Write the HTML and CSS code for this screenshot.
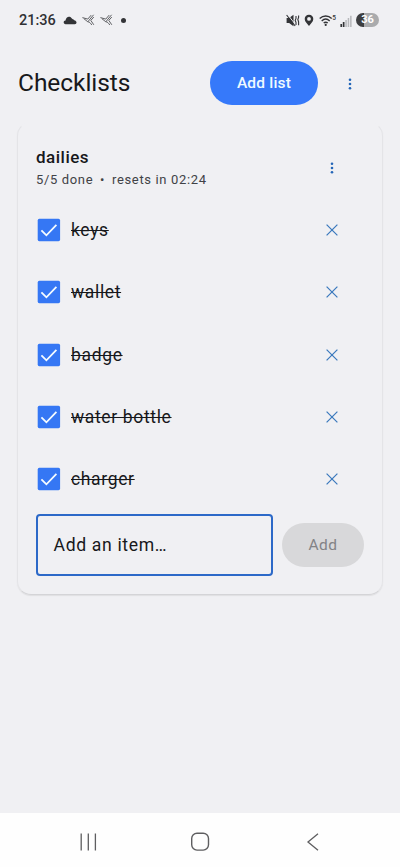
FILE: index.html
```html
<!DOCTYPE html>
<html lang="en">
<head>
<meta charset="utf-8">
<meta name="viewport" content="width=device-width, initial-scale=1">
<title>Checklists</title>
<link rel="stylesheet" href="styles.css">
</head>
<body>
<svg width="0" height="0" class="defs" aria-hidden="true">
  <symbol id="check" viewBox="0 0 24 24"><rect x="0.7" y="0.8" width="22.4" height="22.4" rx="1.6" fill="#3577f4"/><path d="M4.4 12.3l5 5L19.4 6.9" fill="none" stroke="#f4fbff" stroke-width="1.8"/></symbol>
  <symbol id="close" viewBox="0 0 12 12"><path d="M.6.6l10.8 10.8M11.4.6L.6 11.4" fill="none" stroke="#3b79bd" stroke-width="1.25"/></symbol>
  <symbol id="more" viewBox="0 0 4 12"><g fill="#2466b8"><circle cx="2" cy="1.7" r="1.3"/><circle cx="2" cy="6" r="1.3"/><circle cx="2" cy="10.3" r="1.3"/></g></symbol>
  <symbol id="bird" viewBox="0 0 13 12"><path d="M.4 3.6l5.400 1.500 3.400-4M1.800 4.600l4 3.200L11.600.8M11.800 3L8.800 6.400l3 4.400M5.800 7.800c2 0 2.800 1.600 4 3.200" fill="none" stroke="#5a5b5e" stroke-width=".95"/></symbol>
</svg>
<div class="screen">
  <div class="status">
    <span class="clock">21:36</span>
    <svg class="cloud" width="14" height="9" viewBox="0 0 14 9"><path d="M2.600 8.200C.2 8.200-.1 4.800 2.500 4.600 3 .6 6.700-.4 8.600 2.300c.6 1 2 .8 2.600 1.900 2.900.5 3.100 4 .5 4z" fill="#333437"/></svg>
    <svg class="bird" width="13" height="12"><use href="#bird"/></svg>
    <svg class="bird" width="13" height="12"><use href="#bird"/></svg>
    <span class="dot"></span>
    <div class="system">
      <svg width="14" height="13" viewBox="0 0 14 13"><path d="M.6 4h2.500L7.500.8v11.400L3.100 8.900H.6z" fill="#333437"/><path d="M1.600.4l8 10.500" stroke="#f0f0f3" stroke-width="1"/><path d="M.6 1l8.600 11M10 2v2.400l-.8 2 .8 2V11M12.600 1.500v2l-.8 2 .8 2.300v3.400" fill="none" stroke="#333437" stroke-width="1.100"/></svg>
      <svg class="pin" width="10" height="13" viewBox="0 0 10 13"><path fill-rule="evenodd" d="M5 .8C2.400.8.7 2.600.7 5c0 2.800 2.500 4.300 4.300 7 1.800-2.700 4.300-4.200 4.300-7C9.300 2.600 7.600.8 5 .8zM5 3a1.900 1.900 0 1 1 0 3.800A1.900 1.900 0 0 1 5 3z" fill="#333437"/></svg>
      <svg class="wifi" width="18" height="13" viewBox="0 0 18 13"><g fill="none" stroke="#333437" stroke-width="1.350"><path d="M.7 4.600c3.600-3.500 8.500-3.500 12 0"/><path d="M2.700 6.900c2.500-2.400 5.500-2.400 8 0"/><path d="M4.700 9.100c1.300-1.200 2.700-1.200 4 0"/></g><circle cx="6.700" cy="10.900" r="1.100" fill="#333437"/><text x="13.300" y="5.800" class="gen">5</text></svg>
      <svg class="signal" width="12" height="12" viewBox="0 0 12 12"><path d="M.4 9h1.700v3H.4z" fill="#333437"/><path d="M2.800 7h1.700v5H2.800z" fill="#333437"/><path d="M5.300 5h1.500v7H5.300zM7.700 3h1.500v9H7.700zM10.100.7h1.500V12h-1.500z" fill="#b7b8bb"/></svg>
      <span class="battery">36</span>
    </div>
  </div>

  <header class="top">
    <h1>Checklists</h1>
    <button class="primary">Add list</button>
    <svg class="more" width="4" height="12"><use href="#more"/></svg>
  </header>

  <main class="card">
    <div class="card-head">
      <div>
        <h2>dailies</h2>
        <p>5/5 done <span class="sep">•</span> resets in 02:24</p>
      </div>
      <svg width="4" height="12"><use href="#more"/></svg>
    </div>
    <ul>
      <li><svg width="24" height="24"><use href="#check"/></svg><s>keys</s><svg class="x" width="12" height="12"><use href="#close"/></svg></li>
      <li><svg width="24" height="24"><use href="#check"/></svg><s>wallet</s><svg class="x" width="12" height="12"><use href="#close"/></svg></li>
      <li><svg width="24" height="24"><use href="#check"/></svg><s>badge</s><svg class="x" width="12" height="12"><use href="#close"/></svg></li>
      <li><svg width="24" height="24"><use href="#check"/></svg><s>water bottle</s><svg class="x" width="12" height="12"><use href="#close"/></svg></li>
      <li><svg width="24" height="24"><use href="#check"/></svg><s>charger</s><svg class="x" width="12" height="12"><use href="#close"/></svg></li>
    </ul>
    <div class="entry">
      <div class="field">Add an item…</div>
      <button class="add" disabled>Add</button>
    </div>
  </main>

  <nav>
    <svg width="18" height="18" viewBox="0 0 18 18"><path d="M2.200.5v17M9.300.5v17M16.400.5v17" stroke="#5e5e60" stroke-width="1.300"/></svg>
    <svg width="20" height="20" viewBox="0 0 20 20"><rect x="1.700" y="1.300" width="16.800" height="16.800" rx="5.300" fill="none" stroke="#5e5e60" stroke-width="1.400"/></svg>
    <svg width="18" height="18" viewBox="0 0 18 18"><path d="M15 .8L5 9l10 8.200" fill="none" stroke="#5e5e60" stroke-width="1.300"/></svg>
  </nav>
</div>
</body>
</html>
```
FILE: styles.css
```css
* { box-sizing: border-box; }
body, h1, h2, p, ul { margin: 0; padding: 0; }
body { font-family: Roboto, "Liberation Sans", sans-serif; color: #17181b; }
svg { display: block; flex: none; }
.defs { position: absolute; }
button { border: 0; font-family: inherit; padding: 0; flex: none; }

.screen { display: flex; flex-direction: column; height: 867px; background: #f0f0f3; }

.status { display: flex; align-items: center; height: 40px; padding: 0 21px 0 19px; flex: none; }
.clock { width: 44px; font-size: 14.5px; font-weight: 500; color: #303134; }
.bird { margin-left: 5px; }
.dot { width: 5px; height: 5px; border-radius: 50%; background: #333437; margin-left: 8px; }
.system { display: flex; align-items: center; margin-left: auto; }
.pin { margin-left: 4px; }
.wifi { margin-left: 5px; }
.gen { font-size: 6.5px; font-weight: 500; fill: #333437; }
.signal { margin-left: 3px; margin-top: 1px; }
.battery { width: 23px; height: 14px; border-radius: 7px; margin-left: 4px; background: linear-gradient(90deg, #3d3e40 36%, #aaabad 36%); color: #fff; font-size: 11px; line-height: 14px; font-weight: 700; text-align: center; }

.top { display: flex; align-items: center; height: 82px; padding: 3px 48px 0 18px; flex: none; }
h1 { font-size: 24.5px; font-weight: 400; letter-spacing: -.05px; margin-top: -1px; }
.primary { width: 108px; height: 44px; margin-left: auto; border-radius: 22px; background: #3679fa; color: #effaff; font-size: 15.5px; font-weight: 500; letter-spacing: .2px; }
.more { margin: 2px 0 0 30px; }

.card { height: 473px; margin: 0 17px; padding: 14px 18px 18px; border: 1px solid #e4e4e7; border-top-color: #f0f0f3; border-bottom-color: #d4d4d7; border-radius: 14px; box-shadow: 0 1px 1px #dfdfe1; flex: none; }
.card-head { display: flex; justify-content: space-between; align-items: center; height: 61px; margin-bottom: 1px; padding-right: 30px; }
h2 { font-size: 17px; line-height: 23px; font-weight: 500; letter-spacing: .5px; }
p { font-size: 13px; line-height: 21px; letter-spacing: .65px; color: #414246; }
.sep { margin: 0 3px; }
ul { list-style: none; }
li { display: flex; align-items: center; height: 62.3px; padding-right: 26px; padding-left: 1px; }
s { margin-left: 10px; font-size: 17.5px; letter-spacing: .65px; text-decoration-thickness: 1.3px; }
.x { margin-left: auto; }
.entry { display: flex; align-items: center; margin-top: 4px; }
.field { width: 237px; height: 62px; padding-left: 15.5px; border: 2px solid #2c69c8; border-radius: 4px; font-size: 17.6px; line-height: 58px; letter-spacing: .65px; }
.add { width: 82px; height: 44px; margin-left: 9px; border-radius: 22px; background: #d8d8da; color: #838386; font-size: 15.5px; letter-spacing: .4px; }

nav { display: flex; align-items: center; height: 54px; margin-top: auto; padding: 3px 79px 0 79px; background: #fefefe; justify-content: space-between; }
```
